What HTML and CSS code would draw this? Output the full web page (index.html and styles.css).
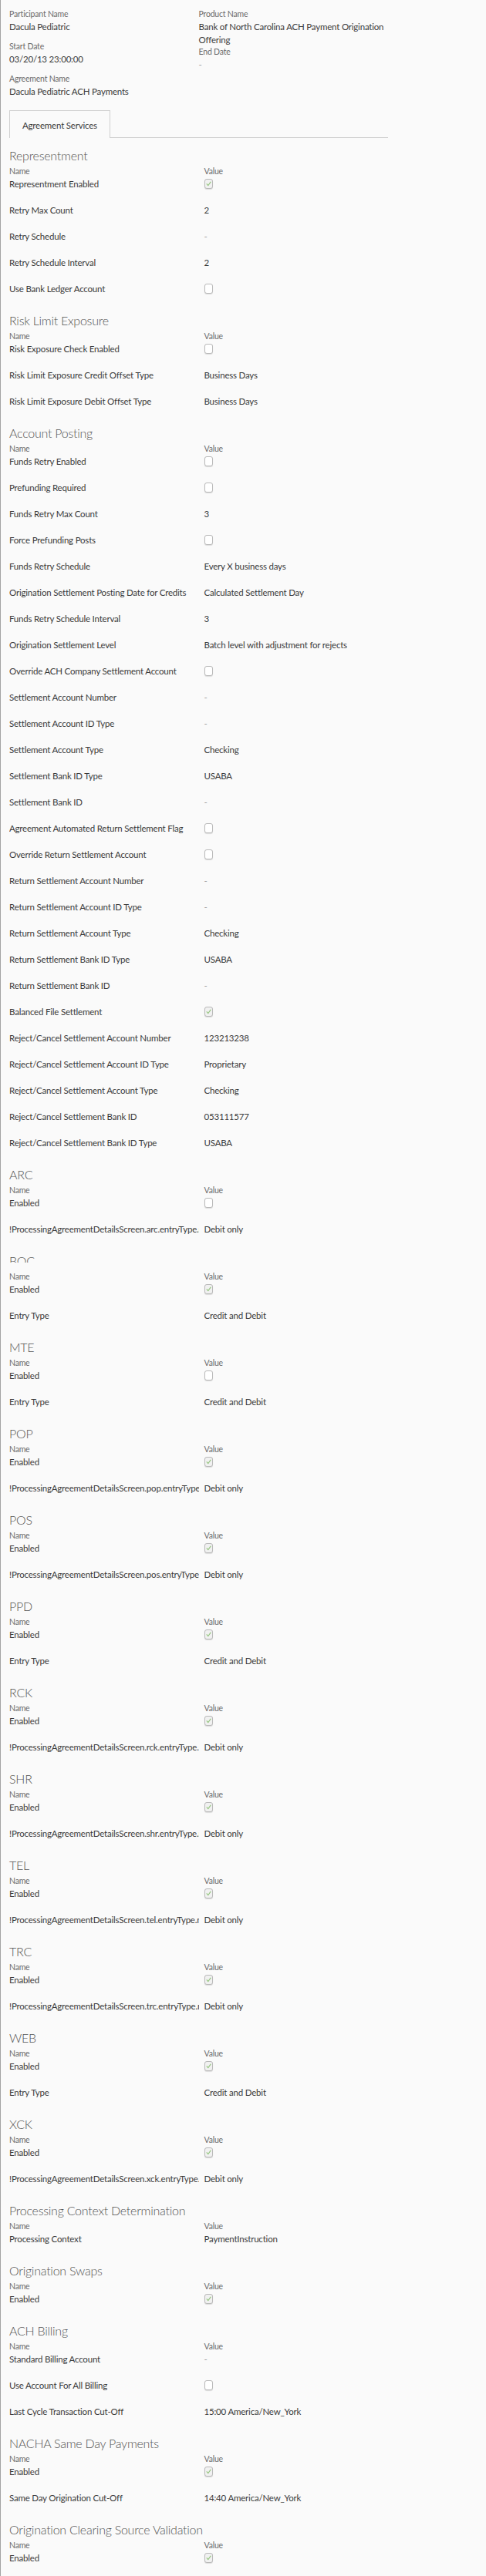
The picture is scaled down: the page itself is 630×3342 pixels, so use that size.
FILE: index.html
```html
<!DOCTYPE html>
<html lang="en">
<head>
<meta charset="utf-8">
<title>Agreement Details</title>
<link rel="stylesheet" href="styles.css">
</head>
<body>
<div class="page">
  <div class="summary">
    <div class="col">
      <div class="field"><div class="flabel">Participant Name</div><div class="fvalue">Dacula Pediatric</div></div>
      <div class="field"><div class="flabel">Start Date</div><div class="fvalue">03/20/13 23:00:00</div></div>
      <div class="field"><div class="flabel">Agreement Name</div><div class="fvalue">Dacula Pediatric ACH Payments</div></div>
    </div>
    <div class="col">
      <div class="field"><div class="flabel">Product Name</div><div class="fvalue">Bank of North Carolina ACH Payment Origination Offering</div></div>
      <div class="field"><div class="flabel">End Date</div><div class="fvalue muted">-</div></div>
    </div>
  </div>

  <div class="tabs"><div class="tab">Agreement Services</div></div>

  <div class="content">
    <section class="group">
      <h2>Representment</h2>
      <div class="grid">
        <div class="hn">Name</div><div class="hv">Value</div>
        <div class="cn">Representment Enabled</div><div class="cv"><span class="cb on"><svg viewBox="0 0 11 13"><polyline points="2.5,6.8 4.6,9.2 8.6,3.6"/></svg></span></div>
        <div class="cn">Retry Max Count</div><div class="cv">2</div>
        <div class="cn">Retry Schedule</div><div class="cv muted">-</div>
        <div class="cn">Retry Schedule Interval</div><div class="cv">2</div>
        <div class="cn">Use Bank Ledger Account</div><div class="cv"><span class="cb"></span></div>
      </div>
    </section>

    <section class="group">
      <h2>Risk Limit Exposure</h2>
      <div class="grid">
        <div class="hn">Name</div><div class="hv">Value</div>
        <div class="cn">Risk Exposure Check Enabled</div><div class="cv"><span class="cb"></span></div>
        <div class="cn">Risk Limit Exposure Credit Offset Type</div><div class="cv">Business Days</div>
        <div class="cn">Risk Limit Exposure Debit Offset Type</div><div class="cv">Business Days</div>
      </div>
    </section>

    <section class="group">
      <h2>Account Posting</h2>
      <div class="grid">
        <div class="hn">Name</div><div class="hv">Value</div>
        <div class="cn">Funds Retry Enabled</div><div class="cv"><span class="cb"></span></div>
        <div class="cn">Prefunding Required</div><div class="cv"><span class="cb"></span></div>
        <div class="cn">Funds Retry Max Count</div><div class="cv">3</div>
        <div class="cn">Force Prefunding Posts</div><div class="cv"><span class="cb"></span></div>
        <div class="cn">Funds Retry Schedule</div><div class="cv">Every X business days</div>
        <div class="cn">Origination Settlement Posting Date for Credits</div><div class="cv">Calculated Settlement Day</div>
        <div class="cn">Funds Retry Schedule Interval</div><div class="cv">3</div>
        <div class="cn">Origination Settlement Level</div><div class="cv">Batch level with adjustment for rejects</div>
        <div class="cn">Override ACH Company Settlement Account</div><div class="cv"><span class="cb"></span></div>
        <div class="cn">Settlement Account Number</div><div class="cv muted">-</div>
        <div class="cn">Settlement Account ID Type</div><div class="cv muted">-</div>
        <div class="cn">Settlement Account Type</div><div class="cv">Checking</div>
        <div class="cn">Settlement Bank ID Type</div><div class="cv">USABA</div>
        <div class="cn">Settlement Bank ID</div><div class="cv muted">-</div>
        <div class="cn">Agreement Automated Return Settlement Flag</div><div class="cv"><span class="cb"></span></div>
        <div class="cn">Override Return Settlement Account</div><div class="cv"><span class="cb"></span></div>
        <div class="cn">Return Settlement Account Number</div><div class="cv muted">-</div>
        <div class="cn">Return Settlement Account ID Type</div><div class="cv muted">-</div>
        <div class="cn">Return Settlement Account Type</div><div class="cv">Checking</div>
        <div class="cn">Return Settlement Bank ID Type</div><div class="cv">USABA</div>
        <div class="cn">Return Settlement Bank ID</div><div class="cv muted">-</div>
        <div class="cn">Balanced File Settlement</div><div class="cv"><span class="cb on"><svg viewBox="0 0 11 13"><polyline points="2.5,6.8 4.6,9.2 8.6,3.6"/></svg></span></div>
        <div class="cn">Reject/Cancel Settlement Account Number</div><div class="cv">123213238</div>
        <div class="cn">Reject/Cancel Settlement Account ID Type</div><div class="cv">Proprietary</div>
        <div class="cn">Reject/Cancel Settlement Account Type</div><div class="cv">Checking</div>
        <div class="cn">Reject/Cancel Settlement Bank ID</div><div class="cv">053111577</div>
        <div class="cn">Reject/Cancel Settlement Bank ID Type</div><div class="cv">USABA</div>
      </div>
    </section>

    <section class="group">
      <h2>ARC</h2>
      <div class="grid">
        <div class="hn">Name</div><div class="hv">Value</div>
        <div class="cn">Enabled</div><div class="cv"><span class="cb"></span></div>
        <div class="cn">!ProcessingAgreementDetailsScreen.arc.entryType.name!</div><div class="cv">Debit only</div>
      </div>
    </section>

    <section class="group">
      <h2 class="glitch">BOC</h2>
      <div class="grid">
        <div class="hn">Name</div><div class="hv">Value</div>
        <div class="cn">Enabled</div><div class="cv"><span class="cb on"><svg viewBox="0 0 11 13"><polyline points="2.5,6.8 4.6,9.2 8.6,3.6"/></svg></span></div>
        <div class="cn">Entry Type</div><div class="cv">Credit and Debit</div>
      </div>
    </section>

    <section class="group">
      <h2>MTE</h2>
      <div class="grid">
        <div class="hn">Name</div><div class="hv">Value</div>
        <div class="cn">Enabled</div><div class="cv"><span class="cb"></span></div>
        <div class="cn">Entry Type</div><div class="cv">Credit and Debit</div>
      </div>
    </section>

    <section class="group">
      <h2>POP</h2>
      <div class="grid">
        <div class="hn">Name</div><div class="hv">Value</div>
        <div class="cn">Enabled</div><div class="cv"><span class="cb on"><svg viewBox="0 0 11 13"><polyline points="2.5,6.8 4.6,9.2 8.6,3.6"/></svg></span></div>
        <div class="cn">!ProcessingAgreementDetailsScreen.pop.entryType.name!</div><div class="cv">Debit only</div>
      </div>
    </section>

    <section class="group">
      <h2>POS</h2>
      <div class="grid">
        <div class="hn">Name</div><div class="hv">Value</div>
        <div class="cn">Enabled</div><div class="cv"><span class="cb on"><svg viewBox="0 0 11 13"><polyline points="2.5,6.8 4.6,9.2 8.6,3.6"/></svg></span></div>
        <div class="cn">!ProcessingAgreementDetailsScreen.pos.entryType.name!</div><div class="cv">Debit only</div>
      </div>
    </section>

    <section class="group">
      <h2>PPD</h2>
      <div class="grid">
        <div class="hn">Name</div><div class="hv">Value</div>
        <div class="cn">Enabled</div><div class="cv"><span class="cb on"><svg viewBox="0 0 11 13"><polyline points="2.5,6.8 4.6,9.2 8.6,3.6"/></svg></span></div>
        <div class="cn">Entry Type</div><div class="cv">Credit and Debit</div>
      </div>
    </section>

    <section class="group">
      <h2>RCK</h2>
      <div class="grid">
        <div class="hn">Name</div><div class="hv">Value</div>
        <div class="cn">Enabled</div><div class="cv"><span class="cb on"><svg viewBox="0 0 11 13"><polyline points="2.5,6.8 4.6,9.2 8.6,3.6"/></svg></span></div>
        <div class="cn">!ProcessingAgreementDetailsScreen.rck.entryType.name!</div><div class="cv">Debit only</div>
      </div>
    </section>

    <section class="group">
      <h2>SHR</h2>
      <div class="grid">
        <div class="hn">Name</div><div class="hv">Value</div>
        <div class="cn">Enabled</div><div class="cv"><span class="cb on"><svg viewBox="0 0 11 13"><polyline points="2.5,6.8 4.6,9.2 8.6,3.6"/></svg></span></div>
        <div class="cn">!ProcessingAgreementDetailsScreen.shr.entryType.name!</div><div class="cv">Debit only</div>
      </div>
    </section>

    <section class="group">
      <h2>TEL</h2>
      <div class="grid">
        <div class="hn">Name</div><div class="hv">Value</div>
        <div class="cn">Enabled</div><div class="cv"><span class="cb on"><svg viewBox="0 0 11 13"><polyline points="2.5,6.8 4.6,9.2 8.6,3.6"/></svg></span></div>
        <div class="cn">!ProcessingAgreementDetailsScreen.tel.entryType.name!</div><div class="cv">Debit only</div>
      </div>
    </section>

    <section class="group">
      <h2>TRC</h2>
      <div class="grid">
        <div class="hn">Name</div><div class="hv">Value</div>
        <div class="cn">Enabled</div><div class="cv"><span class="cb on"><svg viewBox="0 0 11 13"><polyline points="2.5,6.8 4.6,9.2 8.6,3.6"/></svg></span></div>
        <div class="cn">!ProcessingAgreementDetailsScreen.trc.entryType.name!</div><div class="cv">Debit only</div>
      </div>
    </section>

    <section class="group">
      <h2>WEB</h2>
      <div class="grid">
        <div class="hn">Name</div><div class="hv">Value</div>
        <div class="cn">Enabled</div><div class="cv"><span class="cb on"><svg viewBox="0 0 11 13"><polyline points="2.5,6.8 4.6,9.2 8.6,3.6"/></svg></span></div>
        <div class="cn">Entry Type</div><div class="cv">Credit and Debit</div>
      </div>
    </section>

    <section class="group">
      <h2>XCK</h2>
      <div class="grid">
        <div class="hn">Name</div><div class="hv">Value</div>
        <div class="cn">Enabled</div><div class="cv"><span class="cb on"><svg viewBox="0 0 11 13"><polyline points="2.5,6.8 4.6,9.2 8.6,3.6"/></svg></span></div>
        <div class="cn">!ProcessingAgreementDetailsScreen.xck.entryType.name!</div><div class="cv">Debit only</div>
      </div>
    </section>

    <section class="group">
      <h2>Processing Context Determination</h2>
      <div class="grid">
        <div class="hn">Name</div><div class="hv">Value</div>
        <div class="cn">Processing Context</div><div class="cv">PaymentInstruction</div>
      </div>
    </section>

    <section class="group">
      <h2>Origination Swaps</h2>
      <div class="grid">
        <div class="hn">Name</div><div class="hv">Value</div>
        <div class="cn">Enabled</div><div class="cv"><span class="cb on"><svg viewBox="0 0 11 13"><polyline points="2.5,6.8 4.6,9.2 8.6,3.6"/></svg></span></div>
      </div>
    </section>

    <section class="group">
      <h2>ACH Billing</h2>
      <div class="grid">
        <div class="hn">Name</div><div class="hv">Value</div>
        <div class="cn">Standard Billing Account</div><div class="cv muted">-</div>
        <div class="cn">Use Account For All Billing</div><div class="cv"><span class="cb"></span></div>
        <div class="cn">Last Cycle Transaction Cut-Off</div><div class="cv">15:00 America/New_York</div>
      </div>
    </section>

    <section class="group">
      <h2>NACHA Same Day Payments</h2>
      <div class="grid">
        <div class="hn">Name</div><div class="hv">Value</div>
        <div class="cn">Enabled</div><div class="cv"><span class="cb on"><svg viewBox="0 0 11 13"><polyline points="2.5,6.8 4.6,9.2 8.6,3.6"/></svg></span></div>
        <div class="cn">Same Day Origination Cut-Off</div><div class="cv">14:40 America/New_York</div>
      </div>
    </section>

    <section class="group">
      <h2>Origination Clearing Source Validation</h2>
      <div class="grid">
        <div class="hn">Name</div><div class="hv">Value</div>
        <div class="cn">Enabled</div><div class="cv"><span class="cb on"><svg viewBox="0 0 11 13"><polyline points="2.5,6.8 4.6,9.2 8.6,3.6"/></svg></span></div>
      </div>
    </section>
  </div>
</div>
</body>
</html>
```

FILE: styles.css
```css
* { box-sizing: border-box; }

html, body {
  margin: 0;
  padding: 0;
  background: #ffffff;
}

body {
  font-family: Lato, "Open Sans", sans-serif;
  color: #3a3a3a;
}

.page {
  background: #fafafa;
  border-left: 1px solid #a3a3a3;
  padding: 11px 127px 0 11px;
}

.summary {
  display: grid;
  grid-template-columns: 1fr 1fr;
}

.field {
  min-height: 42px;
}

.flabel {
  font-size: 10.5px;
  letter-spacing: -0.2px;
  line-height: 15px;
  color: #6b6b6b;
}

.fvalue {
  font-size: 11.5px;
  letter-spacing: -0.2px;
  line-height: 17px;
}

.muted {
  color: #a0a0a0;
}

.tabs {
  display: flex;
  margin-top: 6px;
  border-bottom: 1px solid #cfcfcf;
}

.tab {
  border: 1px solid #cfcfcf;
  border-bottom: 0;
  margin-bottom: -1px;
  padding: 10px 16px 8px;
  background: #fafafa;
  font-size: 11.5px;
  letter-spacing: -0.2px;
  line-height: 17px;
}

.content {
  padding-top: 11px;
}

.group + .group {
  margin-top: 4px;
}

.group h2 {
  margin: 0;
  font-size: 16px;
  font-weight: 300;
  letter-spacing: -0.25px;
  line-height: 24px;
  color: #555;
}

.group h2.glitch {
  clip-path: inset(0 0 10px 0);
}

.grid {
  display: grid;
  grid-template-columns: 1fr 1fr;
}

.hn, .hv {
  font-size: 10.5px;
  letter-spacing: -0.2px;
  line-height: 16px;
  color: #6b6b6b;
}

.cn, .cv {
  font-size: 11.5px;
  letter-spacing: -0.2px;
  line-height: 17px;
  padding-bottom: 17px;
}

.hv, .cv {
  padding-left: 7px;
}

.cn {
  white-space: nowrap;
  overflow: hidden;
}

.group:last-child .cn:last-of-type,
.group:last-child .cv:last-of-type {
  padding-bottom: 8px;
}

.cb {
  display: block;
  width: 11px;
  height: 13px;
  margin-top: 2px;
  border: 1px solid #b9b9b9;
  border-radius: 3px;
  background: #ffffff;
  box-shadow: 0 1px 1px rgba(0, 0, 0, 0.12);
}

.cb.on {
  background: #f1f1f1;
}

.cb svg {
  display: block;
  width: 9px;
  height: 11px;
  fill: none;
  stroke: #93c47d;
  stroke-width: 1.4;
  stroke-linecap: round;
  stroke-linejoin: round;
}
```
